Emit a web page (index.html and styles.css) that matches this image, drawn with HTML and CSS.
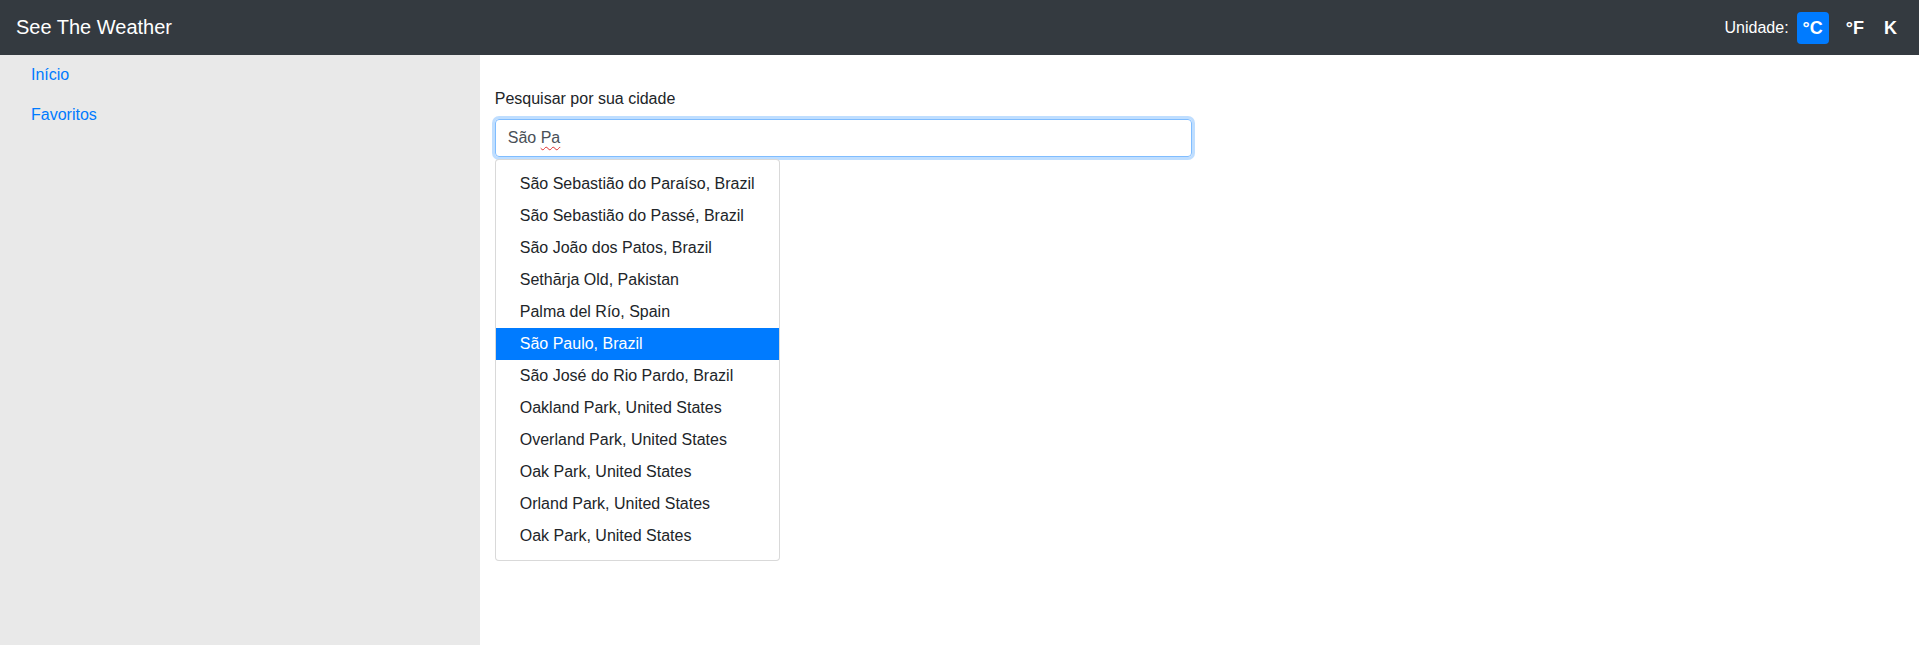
FILE: index.html
```html
<!DOCTYPE html>
<html lang="pt-BR">
<head>
<meta charset="utf-8">
<title>See The Weather</title>
<link rel="stylesheet" href="styles.css">
</head>
<body>
<header class="navbar">
  <a class="brand" href="#">See The Weather</a>
  <div class="units">
    <span class="units-label">Unidade:</span>
    <button class="unit-btn active">°C</button>
    <button class="unit-btn">°F</button>
    <button class="unit-btn">K</button>
  </div>
</header>
<div class="layout">
  <aside class="sidebar">
    <nav class="side-nav">
      <a class="side-link" href="#">Início</a>
      <a class="side-link" href="#">Favoritos</a>
    </nav>
  </aside>
  <main class="main">
    <label class="search-label">Pesquisar por sua cidade</label>
    <div class="search-input">São <span class="spell">Pa</span></div>
    <ul class="dropdown">
      <li class="dropdown-item">São Sebastião do Paraíso, Brazil</li>
      <li class="dropdown-item">São Sebastião do Passé, Brazil</li>
      <li class="dropdown-item">São João dos Patos, Brazil</li>
      <li class="dropdown-item">Sethārja Old, Pakistan</li>
      <li class="dropdown-item">Palma del Río, Spain</li>
      <li class="dropdown-item active">São Paulo, Brazil</li>
      <li class="dropdown-item">São José do Rio Pardo, Brazil</li>
      <li class="dropdown-item">Oakland Park, United States</li>
      <li class="dropdown-item">Overland Park, United States</li>
      <li class="dropdown-item">Oak Park, United States</li>
      <li class="dropdown-item">Orland Park, United States</li>
      <li class="dropdown-item">Oak Park, United States</li>
    </ul>
  </main>
</div>
</body>
</html>
```

FILE: styles.css
```css
* { box-sizing: border-box; }

html, body {
  margin: 0;
  padding: 0;
  height: 100%;
}

body {
  font-family: "Liberation Sans", Arial, sans-serif;
  font-size: 16px;
  line-height: 1.5;
  color: #212529;
  background: #fff;
}

.navbar {
  height: 55px;
  background: #343a40;
  display: flex;
  align-items: center;
  justify-content: space-between;
  padding: 0 16px;
}

.brand {
  color: #fff;
  font-size: 20px;
  line-height: 30px;
  text-decoration: none;
  margin-top: -1px;
}

.units {
  display: flex;
  align-items: center;
  gap: 8px;
}

.units-label {
  color: #fff;
  font-size: 16px;
}

.unit-btn {
  font-family: "Liberation Sans", Arial, sans-serif;
  font-weight: bold;
  font-size: 18px;
  line-height: 32px;
  height: 32px;
  color: #fff;
  background: transparent;
  border: none;
  border-radius: 4px;
  padding: 0 6px;
  margin: 0;
}

.unit-btn.active {
  background: #007bff;
  margin-right: 3px;
}

.layout {
  display: flex;
  min-height: calc(100vh - 55px);
}

.sidebar {
  width: 25%;
  flex: 0 0 25%;
  background: #e9e9e9;
  padding: 0 15px;
}

.side-nav {
  display: flex;
  flex-direction: column;
}

.side-link {
  color: #007bff;
  text-decoration: none;
  padding: 8px 16px;
  line-height: 24px;
}

.main {
  flex: 1;
  padding: 32px 15px 0;
}

.search-label {
  display: block;
  margin-bottom: 8px;
  line-height: 24px;
}

.search-input {
  width: 697px;
  height: 38px;
  padding: 6px 12px;
  border: 1px solid #80bdff;
  border-radius: 4px;
  box-shadow: 0 0 0 3px rgba(0, 123, 255, 0.25);
  color: #495057;
  line-height: 24px;
}

.spell {
  text-decoration: underline wavy #e03030;
  text-decoration-thickness: 1px;
  text-underline-offset: 3px;
}

.dropdown {
  list-style: none;
  margin: 2px 0 0;
  padding: 8px 0;
  width: 285px;
  border: 1px solid rgba(0, 0, 0, 0.15);
  border-radius: 4px;
  background: #fff;
}

.dropdown-item {
  padding: 4px 24px;
  line-height: 24px;
  color: #212529;
  white-space: nowrap;
}

.dropdown-item.active {
  background: #007bff;
  color: #fff;
}
```
